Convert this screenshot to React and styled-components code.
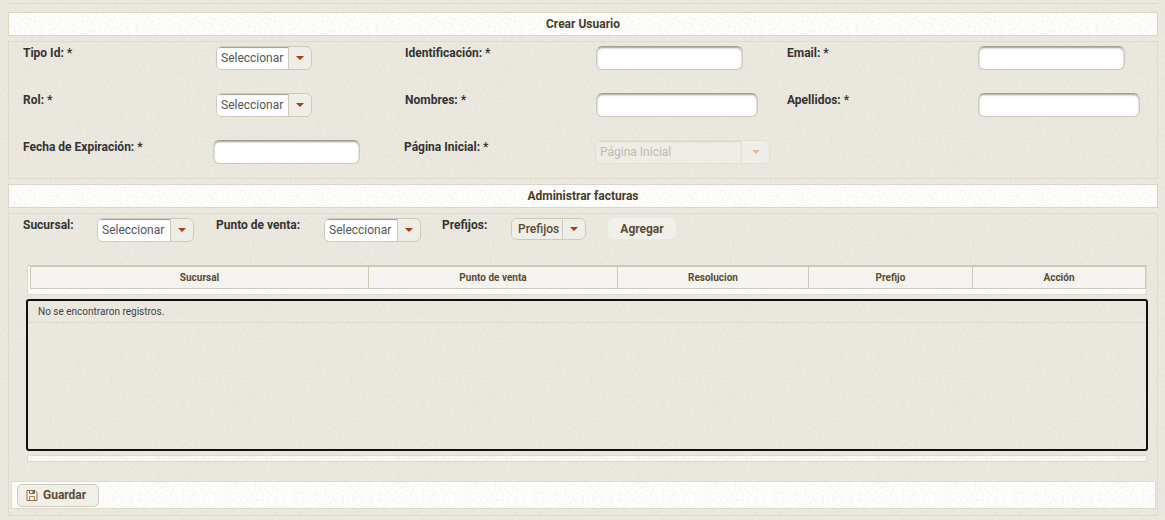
import React from 'react';
import styled, { createGlobalStyle } from 'styled-components';

// faint paper grain behind the panels and bars
const noise = (gain, cut) => {
    const svg = `<svg xmlns='http://www.w3.org/2000/svg' width='240' height='240'><filter id='n'><feTurbulence type='fractalNoise' baseFrequency='0.4' numOctaves='3' stitchTiles='stitch'/><feColorMatrix values='0 0 0 0 0.55 0 0 0 0 0.53 0 0 0 0 0.45 0 0 0 ${gain} ${cut}'/></filter><rect width='240' height='240' filter='url(#n)'/></svg>`;
    return `url("data:image/svg+xml,${encodeURIComponent(svg)}")`;
};

const pageGrain = noise(0.4, -0.18);
const barGrain = noise(0.5, -0.24);

const GlobalStyle = createGlobalStyle`
    html, body {
        margin: 0;
        padding: 0;
        height: 520px;
        overflow: hidden;
        background-color: #ebe8df;
        background-image: ${pageGrain};
        font-family: Roboto, "Liberation Sans", sans-serif;
    }
`;

const TopStrip = styled.div`
    height: 3px;
    border-bottom: 1px solid #dedbcc;
    margin-bottom: 8px;
`;

const Page = styled.div`
    display: flex;
    flex-direction: column;
    padding: 0 7px 0 8px;
`;

const TitleBar = styled.div`
    height: 22px;
    margin-bottom: 5px;
    border: 1px solid #d9d6c5;
    background-color: #fdfdfc;
    background-image: ${barGrain};
    display: flex;
    align-items: center;
    justify-content: center;
    font-size: 12px;
    font-weight: 700;
    color: #4a3b28;
`;

const Panel = styled.section`
    border: 1px solid #dedbcc;
    margin-bottom: 5px;
`;

const FormGrid = styled.div`
    display: grid;
    grid-template-columns: repeat(3, 382px);
    grid-auto-rows: 47px;
    height: 132px;
    padding: 4px 0 0 14px;
`;

const Field = styled.div`
    display: flex;
    align-items: flex-start;
    margin-left: ${(p) => p.$shift || 0}px;
`;

const Label = styled.label`
    flex: none;
    width: ${(p) => p.$width}px;
    font-size: 12px;
    line-height: 14px;
    font-weight: 700;
    color: #333;
`;

const TextInput = styled.input`
    box-sizing: border-box;
    width: ${(p) => p.$width}px;
    height: 24px;
    padding: 0 4px;
    background: #fff;
    border: 1px solid #cdcabb;
    border-top-color: #a09e96;
    border-radius: 6px;
    box-shadow: inset 0 1px 2px #9a9a96;
    outline: none;
`;

const Combo = styled.div`
    box-sizing: border-box;
    flex: none;
    display: flex;
    width: ${(p) => p.$width}px;
    height: ${(p) => p.$height || 24}px;
    border: 1px solid ${(p) => (p.$disabled ? '#e2dfd3' : '#cdcabb')};
    border-radius: 6px;
    overflow: hidden;
    background: #efede7;
`;

const ComboText = styled.div`
    flex: 1;
    display: flex;
    align-items: center;
    padding-left: 4px;
    font-size: 12px;
    white-space: nowrap;
    color: #555;
    background: #fff;
    box-shadow: inset 0 2px 1px -1px #9a9a96;

    ${(p) => p.$disabled && `
        color: #bdbbb2;
        background: #eeece5;
        box-shadow: inset 0 1px 1px #d5d3ca;
    `}

    ${(p) => p.$plain && `
        padding-left: 6px;
        font-weight: 500;
        color: #5c4a32;
        background: #f0eee8;
        box-shadow: none;
    `}
`;

const ComboArrow = styled.div`
    flex: none;
    width: ${(p) => p.$width || 22}px;
    display: flex;
    align-items: center;
    justify-content: center;
    border-left: 1px solid ${(p) => (p.$disabled ? '#e2dfd3' : '#cdcabb')};

    &::after {
        content: "";
        border-left: 4px solid transparent;
        border-right: 4px solid transparent;
        border-top: 4px solid ${(p) => (p.$disabled ? '#e3b9a0' : '#b23a0a')};
    }
`;

const Select = ({ text, width, height, arrow, disabled, plain }) => (
    <Combo $width={width} $height={height} $disabled={disabled}>
        <ComboText $disabled={disabled} $plain={plain}>{text}</ComboText>
        <ComboArrow $width={arrow} $disabled={disabled} />
    </Combo>
);

const Toolbar = styled.div`
    display: flex;
    align-items: flex-start;
    height: 24px;
    padding: 4px 0 0 14px;
`;

const ToolLabel = styled(Label)`
    margin-left: ${(p) => p.$gap || 0}px;
`;

const AddButton = styled.button`
    box-sizing: border-box;
    width: 68px;
    height: 21px;
    margin-left: 22px;
    padding: 0;
    border: none;
    border-radius: 5px;
    background: #f1efe9;
    font-family: inherit;
    font-size: 12px;
    font-weight: 700;
    color: #5c4a32;
`;

const TableWrap = styled.div`
    box-sizing: border-box;
    height: 30px;
    margin: 23px 10px 0 18px;
    padding: 0 0 0 2px;
    border: 1px solid #dedbcc;
    border-top-color: #cdc9ba;
    background-color: #fdfdfc;
    background-image: ${barGrain};
`;

const HeadRow = styled.div`
    box-sizing: border-box;
    display: flex;
    height: 23px;
    border: 1px solid #cdc9ba;
    background: #f4f3ef;
`;

const HeadCell = styled.div`
    box-sizing: border-box;
    width: ${(p) => p.$width}px;
    flex: ${(p) => (p.$width ? 'none' : 1)};
    display: flex;
    align-items: center;
    justify-content: center;
    border-left: ${(p) => (p.$first ? 'none' : '1px solid #cdc9ba')};
    font-size: 10px;
    font-weight: 700;
    color: #5c4a32;
`;

const DataBox = styled.div`
    box-sizing: border-box;
    height: 152px;
    margin: 4px 9px 0 17px;
    border: 2px solid #111;
    border-radius: 3px;
`;

const EmptyRow = styled.div`
    box-sizing: border-box;
    height: 22px;
    padding-left: 10px;
    display: flex;
    align-items: center;
    border-bottom: 1px solid #dedbcc;
    font-size: 10px;
    color: #444;
`;

const ScrollTrack = styled.div`
    box-sizing: border-box;
    height: 7px;
    margin: 4px 10px 0 18px;
    border: 1px solid #dedbcc;
    background-color: #f8f8f4;
    background-image: ${barGrain};
`;

const Footer = styled.div`
    box-sizing: border-box;
    height: 28px;
    margin: 19px 1px 6px 2px;
    padding: 2px 0 0 5px;
    border: 1px solid #dedbcc;
    background-color: #fdfdfc;
    background-image: ${barGrain};
`;

const SaveButton = styled.button`
    box-sizing: border-box;
    display: flex;
    align-items: center;
    gap: 5px;
    width: 82px;
    height: 23px;
    padding: 0 0 1px 8px;
    border: 1px solid #cfcbbb;
    border-radius: 5px;
    background: #f1efe9;
    font-family: inherit;
    font-size: 12px;
    font-weight: 700;
    color: #5c4a32;
`;

const SaveIcon = () => (
    <svg width="12" height="13" viewBox="0 0 12 13" fill="none">
        <path d="M1 1.5h8l2 2v8H1z" fill="#f7f5f0" stroke="#9a6b42" />
        <path d="M3.5 1.5v3h5v-3" stroke="#7d6a58" />
        <rect x="6.5" y="2" width="1.5" height="2" fill="#6e5b48" />
        <path d="M3.5 11.5v-4h5v4" stroke="#a9794f" />
    </svg>
);

const columns = [
    { title: 'Sucursal', width: 337 },
    { title: 'Punto de venta', width: 249 },
    { title: 'Resolucion', width: 191 },
    { title: 'Prefijo', width: 164 },
    { title: 'Acción' },
];

export default function App() {
    return (
        <Page>
            <GlobalStyle />
            <TopStrip />
            <TitleBar>Crear Usuario</TitleBar>
            <Panel>
                <FormGrid>
                    <Field>
                        <Label $width={193}>Tipo Id: *</Label>
                        <Select text="Seleccionar" width={96} />
                    </Field>
                    <Field>
                        <Label $width={191}>Identificación: *</Label>
                        <TextInput $width={147} />
                    </Field>
                    <Field>
                        <Label $width={191}>Email: *</Label>
                        <TextInput $width={147} />
                    </Field>
                    <Field>
                        <Label $width={193}>Rol: *</Label>
                        <Select text="Seleccionar" width={96} />
                    </Field>
                    <Field>
                        <Label $width={191}>Nombres: *</Label>
                        <TextInput $width={162} />
                    </Field>
                    <Field>
                        <Label $width={191}>Apellidos: *</Label>
                        <TextInput $width={162} />
                    </Field>
                    <Field>
                        <Label $width={190}>Fecha de Expiración: *</Label>
                        <TextInput $width={147} />
                    </Field>
                    <Field $shift={-1}>
                        <Label $width={191}>Página Inicial: *</Label>
                        <Select text="Página Inicial" width={175} arrow={27} disabled />
                    </Field>
                </FormGrid>
            </Panel>
            <TitleBar>Administrar facturas</TitleBar>
            <Panel>
                <Toolbar>
                    <Label $width={74}>Sucursal:</Label>
                    <Select text="Seleccionar" width={97} />
                    <ToolLabel $width={108} $gap={22}>Punto de venta:</ToolLabel>
                    <Select text="Seleccionar" width={97} />
                    <ToolLabel $width={69} $gap={21}>Prefijos:</ToolLabel>
                    <Select text="Prefijos" width={75} height={22} plain />
                    <AddButton>Agregar</AddButton>
                </Toolbar>
                <TableWrap>
                    <HeadRow>
                        {columns.map((col, i) => (
                            <HeadCell key={col.title} $width={col.width} $first={i === 0}>{col.title}</HeadCell>
                        ))}
                    </HeadRow>
                </TableWrap>
                <DataBox>
                    <EmptyRow>No se encontraron registros.</EmptyRow>
                </DataBox>
                <ScrollTrack />
                <Footer>
                    <SaveButton><SaveIcon />Guardar</SaveButton>
                </Footer>
            </Panel>
        </Page>
    );
}
